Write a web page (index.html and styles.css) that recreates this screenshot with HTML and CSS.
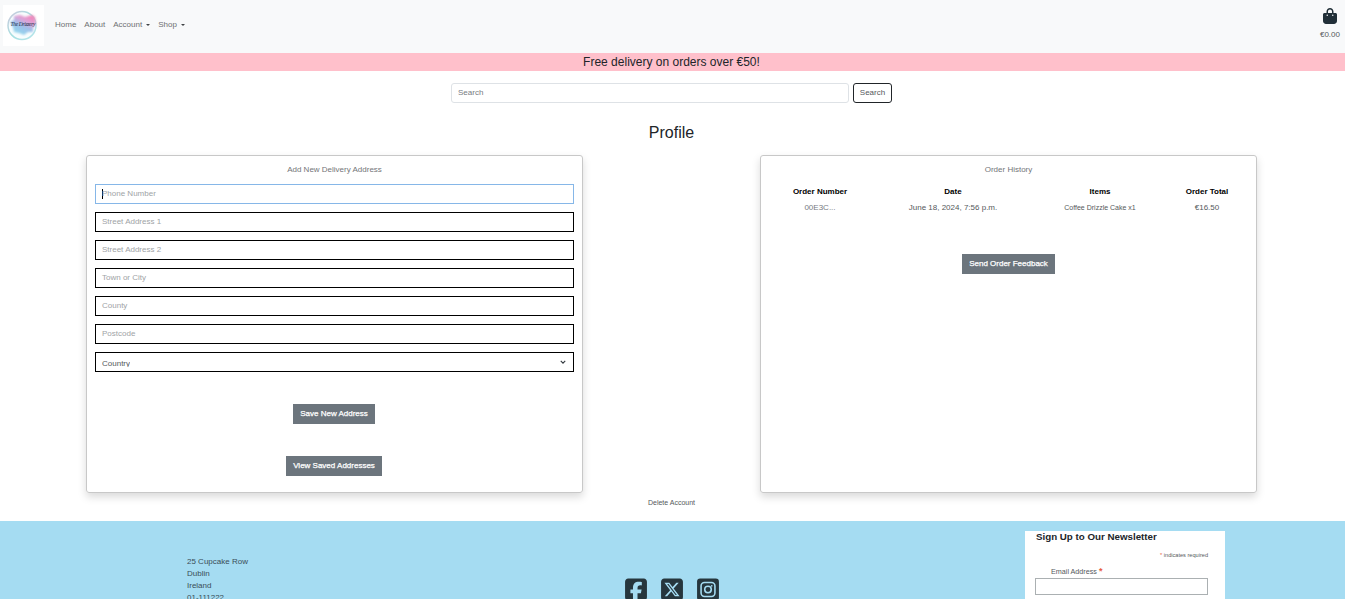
FILE: index.html
```html
<!DOCTYPE html>
<html lang="en">
<head>
<meta charset="utf-8">
<title>Profile</title>
<link rel="stylesheet" href="styles.css">
</head>
<body>
<header class="navbar">
  <a class="brand" href="#">
    <svg width="41" height="41" viewBox="0 0 41 41">
      <defs>
        <linearGradient id="paint" x1=".2" y1="1" x2=".8" y2="0"><stop offset="0" stop-color="#8fdcee"/><stop offset=".45" stop-color="#9fc0ea"/><stop offset=".7" stop-color="#dca4d8"/><stop offset="1" stop-color="#f77fb4"/></linearGradient>
        <linearGradient id="ring" x1="0" y1="0" x2="1" y2="1"><stop offset="0" stop-color="#cfc9dc"/><stop offset=".5" stop-color="#a5dfe0"/><stop offset="1" stop-color="#b9e6ec"/></linearGradient>
        <filter id="soft"><feGaussianBlur stdDeviation=".8"/></filter>
      </defs>
      <rect width="41" height="41" fill="#fff"/>
      <circle cx="19" cy="20.500" r="14" fill="#f8fdfe" stroke="url(#ring)" stroke-width="1.500"/>
      <path d="M11 11l6-1 5 2 7-2 3 2 1 7-3 4 0 4-5 0-4 3-5-2-5-1-1-5-3-5 4-2z" fill="url(#paint)" filter="url(#soft)"/>
      <text class="brand-text" x="20" y="21" text-anchor="middle" textLength="25">The Drizzery</text>
    </svg>
  </a>
  <nav class="nav">
    <a href="#">Home</a>
    <a href="#">About</a>
    <a class="dropdown" href="#">Account</a>
    <a class="dropdown" href="#">Shop</a>
  </nav>
  <a class="bag" href="#">
    <svg width="14" height="16" viewBox="0 0 448 512"><path fill="#212f38" d="M160 112c0-35.300 28.700-64 64-64s64 28.700 64 64v48H160V112zm-48 48H48c-26.500 0-48 21.500-48 48V416c0 53 43 96 96 96H352c53 0 96-43 96-96V208c0-26.500-21.500-48-48-48H336V112C336 50.100 285.900 0 224 0S112 50.100 112 112v48zm24 48a24 24 0 1 1 0 48 24 24 0 1 1 0-48zm152 24a24 24 0 1 1 48 0 24 24 0 1 1-48 0z"/></svg>
    <span>€0.00</span>
  </a>
</header>
<div class="banner">Free delivery on orders over €50!</div>
<form class="search">
  <input class="search-input" type="text" placeholder="Search">
  <button class="search-button" type="button">Search</button>
</form>
<h1 class="title">Profile</h1>
<main class="cards">
  <section class="card">
    <h2 class="card-title">Add New Delivery Address</h2>
    <div class="fields">
      <div class="field focused"><span class="caret"></span><span>Phone Number</span></div>
      <div class="field">Street Address 1</div>
      <div class="field">Street Address 2</div>
      <div class="field">Town or City</div>
      <div class="field">County</div>
      <div class="field">Postcode</div>
      <div class="field select"><span class="select-text">Country</span>
        <svg width="6" height="6" viewBox="0 0 16 16"><path d="M2 5l6 6 6-6" fill="none" stroke="#343a40" stroke-width="3"/></svg>
      </div>
    </div>
    <div class="actions">
      <button class="btn save" type="button">Save New Address</button>
      <button class="btn view" type="button">View Saved Addresses</button>
    </div>
  </section>
  <section class="card">
    <h2 class="card-title">Order History</h2>
    <div class="orders">
      <b>Order Number</b><b>Date</b><b>Items</b><b>Order Total</b>
      <a class="order-id">00E3C...</a><span>June 18, 2024, 7:56 p.m.</span><span class="item">Coffee Drizzle Cake x1</span><span>€16.50</span>
    </div>
    <button class="btn feedback" type="button">Send Order Feedback</button>
  </section>
</main>
<a class="delete" href="#">Delete Account</a>
<footer class="footer">
  <address class="address">25 Cupcake Row<br>Dublin<br>Ireland<br>01-111222</address>
  <div class="social">
    <svg width="22" height="25" viewBox="0 0 448 512"><path fill="#26363d" d="M64 32C28.700 32 0 60.700 0 96V416c0 35.300 28.700 64 64 64h98.200V334.200H109.400V256h52.800V222.300c0-87.100 39.400-127.500 125-127.500 16.200 0 44.200 3.200 55.700 6.400V172c-6-.6-16.500-1-29.600-1-42 0-58.200 15.900-58.200 57.200V256h83.600l-14.400 78.200H255V480H384c35.300 0 64-28.700 64-64V96c0-35.300-28.700-64-64-64H64z"/></svg>
    <svg width="22" height="25" viewBox="0 0 448 512"><path fill="#26363d" d="M64 32C28.700 32 0 60.700 0 96V416c0 35.300 28.700 64 64 64H384c35.300 0 64-28.700 64-64V96c0-35.300-28.700-64-64-64H64zm297.100 84L257.300 234.600 379.400 396H283.800L209 298.100 123.300 396H75.800L186.800 269.100 69.700 116h98l67.700 89.500L313.600 116h47.500zM323.300 367.600L153.400 142.900H125.100L296.900 367.600h26.300z"/></svg>
    <svg width="22" height="25" viewBox="0 0 448 512"><path fill="#26363d" d="M64 32H384a64 64 0 0 1 64 64V416a64 64 0 0 1-64 64H64a64 64 0 0 1-64-64V96a64 64 0 0 1 64-64z"/><rect x="82" y="114" width="284" height="284" rx="70" fill="none" stroke="#a5dcf2" stroke-width="32"/><circle cx="224" cy="256" r="67" fill="none" stroke="#a5dcf2" stroke-width="32"/><circle cx="300" cy="180" r="18" fill="#a5dcf2"/></svg>
  </div>
  <form class="newsletter">
    <h2>Sign Up to Our Newsletter</h2>
    <p class="required"><span class="star">*</span> indicates required</p>
    <label for="email">Email Address <span class="star">*</span></label>
    <input id="email" type="text">
  </form>
</footer>
</body>
</html>
```
FILE: styles.css
```css
* { box-sizing: border-box; }
html, body { height: 599px; overflow: hidden; }
body { margin: 0; background: #fff; color: #212529; font: 8px/12px "Liberation Sans", Arial, sans-serif; }
a { color: inherit; text-decoration: none; }
h1, h2, p { margin: 0; font-weight: 400; }
button, input { font: inherit; }
svg { display: block; }

.navbar { display: flex; height: 53px; padding: 5px 5px 0 3px; background: #f8f9fa; }
.brand { width: 41px; }
.brand-text { font: italic 5.500px "Liberation Serif", serif; fill: #222843; }
.nav { display: flex; align-items: flex-start; gap: 8px; margin: 14px 0 0 11px; color: #6e7072; }
.nav a { white-space: nowrap; }
.dropdown { display: flex; align-items: center; }
.dropdown::after { content: ""; margin-left: 4px; border: 2px solid transparent; border-top: 2.500px solid #3f4245; border-bottom: 0; }
.bag { display: flex; flex-direction: column; align-items: center; gap: 5px; margin: 3px 0 0 auto; color: #55595c; }

.banner { height: 18px; background: #ffc0cb; text-align: center; font-size: 12px; line-height: 18px; padding-right: 2px; }

.search { display: flex; gap: 4px; width: 441px; margin: 12px 0 0 451px; }
.search-input { flex: 1; min-width: 0; height: 20px; padding: 0 6px 1px; border: 1px solid #dee2e6; border-radius: 3px; outline: 0; }
.search-input::placeholder { color: #777b7f; }
.search-button { width: 39px; height: 20px; padding: 0 0 1px; border: 1px solid #212529; border-radius: 3px; background: #fff; color: #55595c; }

.title { margin-top: 20px; padding-right: 2px; font-size: 16px; line-height: 19px; text-align: center; }

.cards { display: flex; justify-content: space-between; margin: 13px 88px 0 86px; }
.card { display: flex; flex-direction: column; align-items: center; width: 497px; height: 338px; padding: 7px 8px; border: 1px solid #c8c8c8; border-radius: 3px; box-shadow: 0 4px 8px rgba(0, 0, 0, .15); }
.card-title { font-size: 8px; line-height: 13px; color: #737578; }
.fields { display: grid; gap: 8px; width: 479px; margin-top: 8px; }
.field { display: flex; align-items: center; height: 20px; padding: 1px 6px; border: 1px solid #000; color: #a0a3a6; }
.focused { border-color: #86b7e8; }
.caret { width: 1px; height: 10px; margin-right: -1px; background: #000; }
.select { justify-content: space-between; padding: 0 7px 0 6px; color: #55595c; }
.select-text { height: 8px; margin-top: 2px; line-height: 10px; overflow: hidden; }

.btn { height: 20px; padding: 0 0 1px; border: 0; background: #6c757d; color: #fff; font-weight: 400; -webkit-text-stroke: .25px #fff; }
.actions { display: flex; flex-direction: column; align-items: center; gap: 32px; margin-top: 32px; padding-right: 1px; }
.save { width: 82px; }
.view { width: 96px; }
.feedback { width: 93px; margin-top: 40px; }

.orders { display: grid; grid-template-columns: 102px 164px 130px 84px; row-gap: 4px; margin-top: 10px; padding-left: 1px; text-align: center; color: #55595c; }
.orders b { color: #000; }
.order-id { color: #777b7f; }
.item { font-size: 7px; }

.delete { display: block; margin-top: 4px; padding-right: 2px; text-align: center; font-size: 7px; color: #55595c; }

.footer { display: flex; height: 86px; margin-top: 12px; overflow: hidden; background: #a5dcf2; }
.address { width: 438px; padding: 35px 0 0 187px; font-style: normal; color: #3a4d57; }
.social { display: flex; gap: 14px; width: 587px; padding: 56px 0 0 187px; }
.newsletter { width: 200px; height: 120px; padding: 0 10px; margin-top: 10px; background: #fff; flex-shrink: 0; }
.newsletter h2 { padding-left: 1px; font-size: 9.750px; line-height: 12px; font-weight: 700; }
.required { margin: 6px 7px 0 0; text-align: right; font-size: 5.600px; color: #55595c; }
.newsletter label { display: block; height: 12px; margin: 5px 0 0 16px; font-size: 7.200px; color: #55595c; }
.newsletter input { display: block; width: 173px; height: 17px; border: 1px solid #abb0b2; margin-top: 0; }
.star { color: #e85c41; }
label .star { font-size: 9px; line-height: 8px; font-weight: 700; }
```
